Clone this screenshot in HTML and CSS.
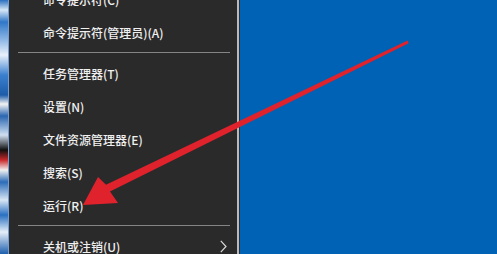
FILE: index.html
```html
<!DOCTYPE html>
<html lang="zh-CN">
  <head>
    <meta charset="UTF-8" />
    <meta name="viewport" content="width=device-width, initial-scale=1.0" />
    <title>Win+X 菜单</title>
    <link rel="stylesheet" href="styles.css">
  </head>
  <body>
    <div class="screen">
      <div class="desktop-icons"></div>

      <div class="menu">
        <ul class="menu-list">
          <li class="item">命令提示符(C)</li>
          <li class="item">命令提示符(管理员)(A)</li>
          <li class="sep"></li>
          <li class="item">任务管理器(T)</li>
          <li class="item">设置(N)</li>
          <li class="item">文件资源管理器(E)</li>
          <li class="item">搜索(S)</li>
          <li class="item">运行(R)</li>
          <li class="sep"></li>
          <li class="item">
            关机或注销(U)
            <svg class="chevron" width="7" height="13" viewBox="0 0 7 13">
              <polyline points="0.8,0.8 6,6.5 0.8,12.2" fill="none" stroke="#d8d8d8" stroke-width="1.2" />
            </svg>
          </li>
        </ul>
      </div>

      <div class="desktop"></div>

      <!-- red arrow drawn on top of the screenshot -->
      <svg class="arrow" width="497" height="254" viewBox="0 0 497 254">
        <polygon points="83,205 98,177 106,184.8 407.6,40.6 408.6,43.2 110,191.5 118,203" fill="#e0222c" />
      </svg>
    </div>
  </body>
</html>
```

FILE: styles.css
```css
html,
body {
  margin: 0;
  padding: 0;
}

body {
  font-family: "Noto Sans CJK SC", "Noto Sans", sans-serif;
  background-color: #0062b4;
  overflow: hidden;
}

.screen {
  position: relative;
  display: flex;
  width: 497px;
  height: 254px;
  overflow: hidden;
}

.desktop-icons {
  width: 8px;
  flex-shrink: 0;
  background: linear-gradient(
    to bottom,
    #2a6fc0 0px,
    #d6e6f6 10px,
    #2f77c8 22px,
    #8fb7e6 40px,
    #e8f0fa 55px,
    #3b80cf 75px,
    #1d5ca8 95px,
    #f2f2f2 104px,
    #2a66b0 116px,
    #cfdff0 135px,
    #101010 150px,
    #c8282c 160px,
    #f0f0f0 170px,
    #2c6cb8 182px,
    #d8e6f4 200px,
    #2a70c2 215px,
    #e4eef8 232px,
    #1e5fae 254px
  );
  border-right: 1px solid #6f9fd6;
}

.menu {
  width: 228px;
  flex-shrink: 0;
  background-color: #2b2a2b;
  border-right: 2px solid #b9b9b9;
  box-shadow: 1px 0 0 #28303a;
}

.menu-list {
  list-style: none;
  margin: -17.5px 0 0 0;
  padding: 0;
}

.item {
  display: flex;
  align-items: center;
  height: 33px;
  padding: 0 10px 0 34px;
  color: #f0f0f0;
  font-size: 12px;
  font-weight: 500;
  white-space: nowrap;
}

.chevron {
  margin-left: auto;
}

.sep {
  height: 8px;
  display: flex;
  align-items: center;
  padding: 0 7px 0 9px;
}

.sep::before {
  content: "";
  flex: 1;
  height: 1px;
  background-color: #858585;
}

.desktop {
  flex: 1;
  margin-left: 1px;
  background-color: #0062b4;
}

.arrow {
  position: absolute;
  left: 0;
  top: 0;
  pointer-events: none;
}
```
